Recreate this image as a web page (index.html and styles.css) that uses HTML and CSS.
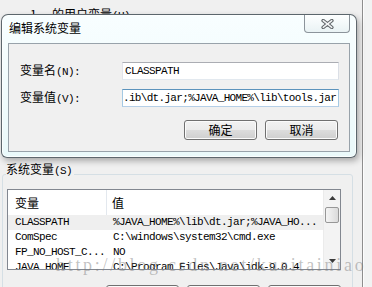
FILE: index.html
```html
<!DOCTYPE html>
<html lang="zh-CN">
<head>
<meta charset="utf-8">
<title>编辑系统变量</title>
<link rel="stylesheet" href="styles.css">
</head>
<body>
<div class="desk">
  <div class="win">
    <div class="user-label">1...&nbsp; 的用户变量<span class="mono">(U)</span></div>
    <div class="user-box"></div>
    <fieldset class="group">
      <legend class="legend">系统变量<span class="mono">(S)</span></legend>
      <div class="list">
        <div class="list-main">
          <div class="hdr"><span class="c1 hc">变量</span><span class="c2 hc">值</span></div>
          <div class="row sel"><span class="c1">CLASSPATH</span><span class="c2">%JAVA_HOME%\lib\dt.jar;%JAVA_HO...</span></div>
          <div class="row"><span class="c1">ComSpec</span><span class="c2">C:\windows\system32\cmd.exe</span></div>
          <div class="row"><span class="c1">FP_NO_HOST_C...</span><span class="c2">NO</span></div>
          <div class="row"><span class="c1">JAVA_HOME</span><span class="c2">C:\Program Files\Java\jdk-9.0.4</span></div>
        </div>
        <div class="vscroll">
          <div class="sb-btn"><svg width="7" height="4" viewBox="0 0 7 4"><path d="M0 4 L3.5 0 L7 4 Z" fill="#3a3a3a"/></svg></div>
          <div class="thumb"></div>
          <div class="sb-track"></div>
          <div class="sb-btn"><svg width="7" height="4" viewBox="0 0 7 4"><path d="M0 0 L7 0 L3.5 4 Z" fill="#3a3a3a"/></svg></div>
        </div>
      </div>
      <div class="btns">
        <div class="btn">新建(W)...</div>
        <div class="btn">编辑(I)...</div>
        <div class="btn">删除(L)</div>
      </div>
    </fieldset>
  </div>
  <div class="edge"></div>
</div>

<div class="dialog">
  <div class="titlebar">
    <div class="title">编辑系统变量</div>
    <div class="close">
      <svg width="13" height="10" viewBox="0 0 13 10"><path d="M2.2 1.6 L10.8 8.4 M10.8 1.6 L2.2 8.4" stroke="#5f6468" stroke-width="3.6" stroke-linecap="round"/><path d="M2.2 1.6 L10.8 8.4 M10.8 1.6 L2.2 8.4" stroke="#f2f4f5" stroke-width="1.5" stroke-linecap="round"/></svg>
    </div>
  </div>
  <div class="client">
    <div class="form">
      <div class="lbl">变量名<span class="mono">(N):</span></div>
      <div class="field">CLASSPATH</div>
      <div class="lbl">变量值<span class="mono">(V):</span></div>
      <div class="field focus">.ib\dt.jar;%JAVA_HOME%\lib\tools.jar</div>
    </div>
    <div class="actions">
      <div class="btn">确定</div>
      <div class="btn">取消</div>
    </div>
  </div>
</div>

<div class="wm">http://blog.csdn.net/kuaitainiao</div>
</body>
</html>
```

FILE: styles.css
```css
* { box-sizing: border-box; }
html, body { margin: 0; padding: 0; }
body {
  width: 372px;
  height: 287px;
  overflow: hidden;
  position: relative;
  background: #f0f0f0;
  font-family: "Noto Sans CJK SC", sans-serif;
  font-size: 12px;
  color: #000;
}
.mono {
  font-family: "Liberation Mono", monospace;
  font-size: 11px;
  letter-spacing: -0.6px;
}

.desk { display: flex; height: 287px; }
.win {
  flex: none;
  width: 363px;
  border-right: 1px solid #8e8e8e;
  padding: 8px 9px 0 2px;
}
.edge { flex: 1; background: #f2f3f3; border-left: 1px solid #fdfdfd; }

.user-label { height: 12px; line-height: 12px; padding-left: 28px; white-space: nowrap; }
.user-box { height: 143px; }

.group {
  margin: 0;
  min-width: 0;
  border: 1px solid #d5dfe5;
  border-radius: 3px;
  padding: 0 11px 0 4px;
}
.legend { padding: 0 2px 8px 0; margin-left: -1px; line-height: 12px; }

.list {
  margin-top: 4px;
  height: 81px;
  border: 1px solid #828790;
  background: #fff;
  display: flex;
}
.list-main { flex: 1; overflow: hidden; }
.hdr { display: flex; height: 25px; line-height: 25px; }
.c1 { flex: none; width: 99px; padding-left: 7px; }
.c2 { padding-left: 6px; }
.hc.c1 { border-right: 1px solid #e3e8ee; }
.hc.c2 { padding-left: 5px; }
.row {
  display: flex;
  height: 15px;
  line-height: 15px;
  font-family: "Liberation Mono", monospace;
  font-size: 11px;
  letter-spacing: -0.6px;
  white-space: nowrap;
}
.row.sel { background: #efefef; }

.vscroll {
  flex: none;
  width: 17px;
  display: flex;
  flex-direction: column;
  background: #f3f3f3;
  border-left: 1px solid #ebebeb;
}
.sb-btn { height: 16px; display: flex; align-items: center; justify-content: center; flex: none; }
.thumb {
  flex: none;
  height: 16px;
  margin: 1px 1px 0;
  border: 1px solid #979797;
  border-radius: 2px;
  background: linear-gradient(to right, #f4f4f4, #e8e8e8 50%, #dadada);
}
.sb-track { flex: 1; }

.btns { display: flex; justify-content: flex-end; gap: 8px; margin-top: 15px; }
.btn {
  width: 73px;
  height: 20px;
  border: 1px solid #707070;
  border-radius: 3px;
  background: linear-gradient(#f2f2f2 0%, #ebebeb 50%, #dddddd 50%, #cfcfcf 100%);
  box-shadow: inset 0 0 0 1px #fbfbfb;
  display: flex;
  align-items: center;
  justify-content: center;
  line-height: 12px;
}
.btns .btn { height: 23px; }

.dialog {
  position: absolute;
  left: 1px;
  top: 14px;
  width: 356px;
  height: 144px;
  border: 1px solid rgba(55, 65, 72, 0.8);
  border-radius: 7px 7px 6px 6px;
  background: linear-gradient(#f8feff, #eaf9fa);
  box-shadow: inset 0 0 0 1px rgba(255, 255, 255, 0.75), 2px 3px 6px rgba(0, 0, 0, 0.3);
  display: flex;
  flex-direction: column;
}
.titlebar { flex: none; height: 28px; display: flex; align-items: flex-start; }
.title { margin: 7px 0 0 7px; line-height: 12px; }
.close {
  margin-left: auto;
  margin-right: 6px;
  width: 46px;
  height: 18px;
  border: 1px solid #8c949b;
  border-top: none;
  border-radius: 0 0 4px 4px;
  background: linear-gradient(rgba(255, 255, 255, 0.7), rgba(228, 238, 240, 0.7));
  display: flex;
  align-items: center;
  justify-content: center;
}
.client {
  flex: 1;
  margin: 0 6px 5px;
  background: #f0f0f0;
  border: 1px solid #98a2aa;
  padding: 18px 10px 0 11px;
}
.form {
  display: grid;
  grid-template-columns: 102px 217px;
  row-gap: 9px;
  align-items: center;
}
.lbl { line-height: 12px; white-space: nowrap; }
.field {
  height: 18px;
  border: 1px solid;
  border-color: #abadb3 #dbdfe6 #e3e9ef #e2e3ea;
  background: #fff;
  padding-left: 2px;
  font-family: "Liberation Mono", monospace;
  font-size: 11px;
  letter-spacing: -0.6px;
  line-height: 16px;
  white-space: nowrap;
  overflow: hidden;
}
.field.focus {
  border-color: #5c93bc #a4c9e3 #b5cfe7 #a4c9e3;
  padding-left: 0;
  letter-spacing: -0.68px;
}
.actions { display: flex; justify-content: flex-end; gap: 8px; margin-top: 13px; padding-right: 1px; }

.wm {
  position: absolute;
  left: 56px;
  top: 255px;
  font-family: "Liberation Serif", serif;
  font-size: 18px;
  letter-spacing: 2.7px;
  color: rgba(120, 120, 120, 0.45);
  white-space: nowrap;
  pointer-events: none;
}
```
